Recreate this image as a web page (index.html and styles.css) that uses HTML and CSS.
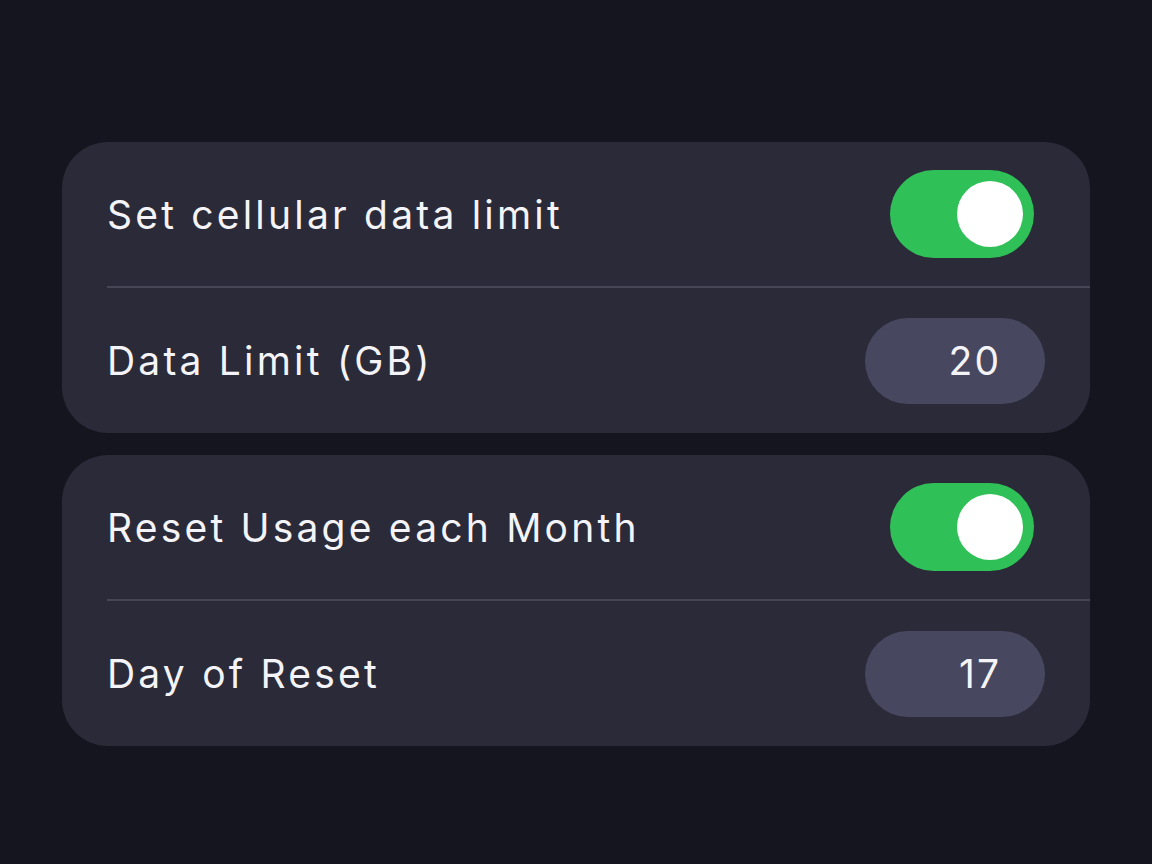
FILE: index.html
```html
<!DOCTYPE html>
<html>
<head>
<meta charset="utf-8">
<link rel="stylesheet" href="styles.css">
</head>
<body>
<main class="page">
  <section class="card">
    <div class="row">
      <span class="label">Set cellular data limit</span>
      <div class="toggle on"><div class="knob"></div></div>
    </div>
    <div class="divider"></div>
    <div class="row">
      <span class="label">Data Limit (GB)</span>
      <div class="pill">20</div>
    </div>
  </section>
  <section class="card">
    <div class="row">
      <span class="label">Reset Usage each Month</span>
      <div class="toggle on"><div class="knob"></div></div>
    </div>
    <div class="divider"></div>
    <div class="row">
      <span class="label">Day of Reset</span>
      <div class="pill">17</div>
    </div>
  </section>
</main>
</body>
</html>
```
FILE: styles.css
```css
* { box-sizing: border-box; }
html, body {
  margin: 0;
  padding: 0;
  background: #15151f;
  width: 1152px;
  height: 864px;
  overflow: hidden;
}
.page {
  padding: 142px 62px 0 62px;
  display: flex;
  flex-direction: column;
  gap: 22px;
  font-family: Inter, "Noto Sans", sans-serif;
  color: #f4f4f8;
}
.card {
  width: 1028px;
  background: #2a2a38;
  border-radius: 46px;
  display: flex;
  flex-direction: column;
  padding-left: 45px;
}
.row {
  height: 144px;
  display: flex;
  align-items: center;
  justify-content: space-between;
  padding-right: 45px;
}
.row + .divider + .row { height: 145px; }
.divider {
  height: 2px;
  background: #464656;
}
.label {
  font-size: 39px;
  letter-spacing: 3.2px;
  font-weight: 400;
}
.toggle {
  width: 144px;
  height: 88px;
  border-radius: 44px;
  background: #30c058;
  display: flex;
  align-items: center;
  justify-content: flex-end;
  padding-right: 11px;
  margin-right: 11px;
}
.knob {
  width: 66px;
  height: 66px;
  border-radius: 50%;
  background: #ffffff;
}
.pill {
  width: 180px;
  height: 86px;
  border-radius: 43px;
  background: #474760;
  display: flex;
  align-items: center;
  justify-content: flex-end;
  padding-right: 44px;
  font-size: 39px;
  letter-spacing: 2px;
}
```
